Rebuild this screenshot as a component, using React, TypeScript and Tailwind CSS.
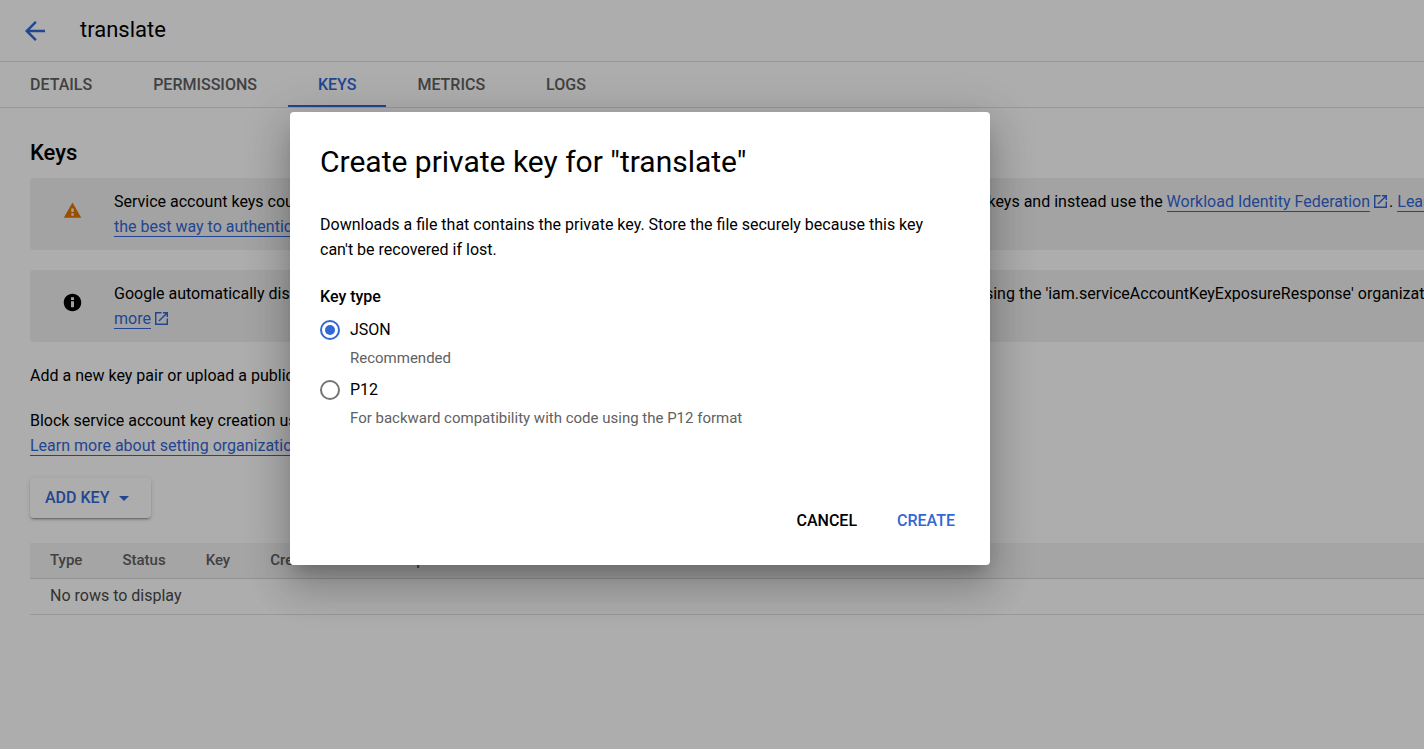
import React from "react";

const tabs = ["DETAILS", "PERMISSIONS", "KEYS", "METRICS", "LOGS"];
const columns = ["Type", "Status", "Key", "Creation date", "Expiration date"];
const keyTypes = [
  { id: "json", label: "JSON", hint: "Recommended" },
  { id: "p12", label: "P12", hint: "For backward compatibility with code using the P12 format" },
];

function ExternalIcon() {
  return (
    <svg viewBox="3 3 18 18" className="ml-1 inline-block size-[13px] align-[-1px] text-[#3367d6]" fill="currentColor" aria-hidden="true">
      <path d="M19 19H5V5h7V3H3v18h18v-9h-2v7zM14 3v2h3.59l-9.83 9.83 1.41 1.41L19 6.41V10h2V3h-7z" />
    </svg>
  );
}

function TextLink({ children }: { children: React.ReactNode }) {
  return (
    <a href="#" className="border-b border-[#3367d6] text-[#3367d6]">
      {children}
    </a>
  );
}

function Notice({ icon, children }: { icon: React.ReactNode; children: React.ReactNode }) {
  return (
    <div className="mb-5 flex rounded-l bg-[#f1f1f1] py-[11px] pl-8">
      <div className="mr-[31px] mt-[11px] flex size-[21px] shrink-0 items-center justify-center">{icon}</div>
      <p className="whitespace-nowrap leading-[25px]">{children}</p>
    </div>
  );
}

export default function App() {
  const [selected, setSelected] = React.useState("json");
  return (
    <div className="relative min-h-screen overflow-hidden bg-white font-[Roboto,sans-serif] text-base text-black">
      <header className="flex h-[62px] items-center border-b border-[#e0e0e0] pl-5">
        <button aria-label="Back" className="text-[#3367d6]">
          <svg viewBox="0 0 24 24" className="size-[30px]" fill="currentColor">
            <path d="M20 11H7.83l5.59-5.59L12 4l-8 8 8 8 1.41-1.41L7.83 13H20v-2z" />
          </svg>
        </button>
        <h1 className="ml-[30px] pb-0.5 text-[22px] leading-[30px]">translate</h1>
      </header>
      <nav className="flex h-[46px] gap-px border-b border-[#e0e0e0]">
        {tabs.map((t) => (
          <a
            key={t}
            href="#"
            className={
              t === "KEYS"
                ? "border-b-2 border-[#3367d6] px-[30px] pt-[11px] font-medium text-[#3367d6]"
                : "px-[30px] pt-[11px] font-medium text-[#616161]"
            }
          >
            {t}
          </a>
        ))}
      </nav>
      <main className="pl-[30px] pt-[30px]">
        <h2 className="mb-2.5 text-[22px] font-medium leading-[30px]">Keys</h2>
        <Notice
          icon={
            <svg viewBox="0 0 24 24" className="size-[19px] shrink-0 text-[#e37400]" fill="currentColor">
              <path d="M1 21h22L12 2 1 21zm12.5-2.5h-3v-3h3v3zm0-4.5h-3V9.5h3V14z" />
            </svg>
          }
        >
          Service account keys could pose a security threat if compromised. We recommend you avoid downloading service account keys and instead use the{" "}
          <TextLink>Workload Identity Federation</TextLink>
          <ExternalIcon />
          <span className="ml-0.5">.</span> <TextLink>Learn more about</TextLink>
          <br />
          <TextLink>the best way to authenticate service accounts on Google Cloud</TextLink>
        </Notice>
        <Notice
          icon={
            <svg viewBox="0 0 24 24" className="size-[21px] shrink-0" fill="currentColor">
              <path d="M12 2C6.48 2 2 6.48 2 12s4.48 10 10 10 10-4.48 10-10S17.52 2 12 2zm1.7 15.5h-3.4v-7h3.4v7zm0-8.5h-3.4V6h3.4v3z" />
            </svg>
          }
        >
          Google automatically disables service account keys discovered in public repositories. You can customize this behavior by using the 'iam.serviceAccountKeyExposureResponse' organization policy. <TextLink>Learn</TextLink>
          <br />
          <TextLink>more</TextLink>
          <ExternalIcon />
        </Notice>
        <p className="mb-5 mt-[21px] leading-[25px]">Add a new key pair or upload a public key certificate from an existing key pair.</p>
        <p className="leading-[25px]">
          Block service account key creation using organization policies.
          <br />
          <TextLink>Learn more about setting organization policies for service accounts</TextLink>
        </p>
        <button className="mt-5 flex h-10 items-center gap-2.5 rounded pl-[15px] pr-[22px] font-medium text-[#3367d6] shadow-[0_3px_1px_-2px_rgba(0,0,0,0.2),0_2px_2px_0_rgba(0,0,0,0.14),0_1px_5px_0_rgba(0,0,0,0.12)]">
          ADD KEY
          <svg viewBox="0 0 10 5" className="h-[5px] w-2.5" fill="currentColor" aria-hidden="true">
            <path d="M0 0h10L5 5z" />
          </svg>
        </button>
        <table className="mt-[25px] w-full text-left">
          <thead>
            <tr className="h-[35px] border-b border-[#d8d8d8] bg-[#f3f3f3] text-[15px] text-[#616161]">
              {columns.map((c) => (
                <th key={c} className="whitespace-nowrap px-5 font-medium last:w-full">{c}</th>
              ))}
            </tr>
          </thead>
          <tbody>
            <tr className="h-9 border-b border-[#e0e0e0] text-[#4a4a4a]">
              <td colSpan={5} className="px-5">No rows to display</td>
            </tr>
          </tbody>
        </table>
      </main>

      <div className="absolute inset-0 flex items-start bg-black/32 pl-[290px] pt-28">
        <div
          role="dialog"
          aria-modal="true"
          aria-labelledby="dialog-title"
          className="w-full max-w-[700px] rounded bg-white px-[30px] pb-6 pt-[30px] shadow-[0_11px_15px_-7px_rgba(0,0,0,0.2),0_24px_38px_3px_rgba(0,0,0,0.14),0_9px_46px_8px_rgba(0,0,0,0.12)]"
        >
          <h2 id="dialog-title" className="mb-[30px] text-[30px] leading-[40px]">Create private key for "translate"</h2>
          <p className="leading-[25px]">
            Downloads a file that contains the private key. Store the file securely because this key can't be recovered if lost.
          </p>
          <fieldset className="mt-[22px]">
            <legend className="mb-[11px] font-medium leading-[25px]">Key type</legend>
            {keyTypes.map((k) => (
              <div key={k.id} className="h-[60px]">
                <label className="flex h-5 items-center gap-2.5">
                  <input
                    type="radio"
                    name="keyType"
                    checked={selected === k.id}
                    onChange={() => setSelected(k.id)}
                    className="grid size-5 appearance-none place-content-center rounded-full border-2 border-[#757575] before:size-2.5 before:rounded-full checked:border-[#3367d6] checked:before:bg-[#3367d6]"
                  />
                  {k.label}
                </label>
                <p className="pl-[30px] pt-2 text-[15px] leading-5 text-[#616161]">{k.hint}</p>
              </div>
            ))}
          </fieldset>
          <div className="mt-[61px] flex justify-end gap-2.5 pr-[5px] font-medium">
            <button className="h-10 px-[15px]">CANCEL</button>
            <button className="h-10 pl-[15px] text-[#3367d6]">CREATE</button>
          </div>
        </div>
      </div>
    </div>
  );
}
